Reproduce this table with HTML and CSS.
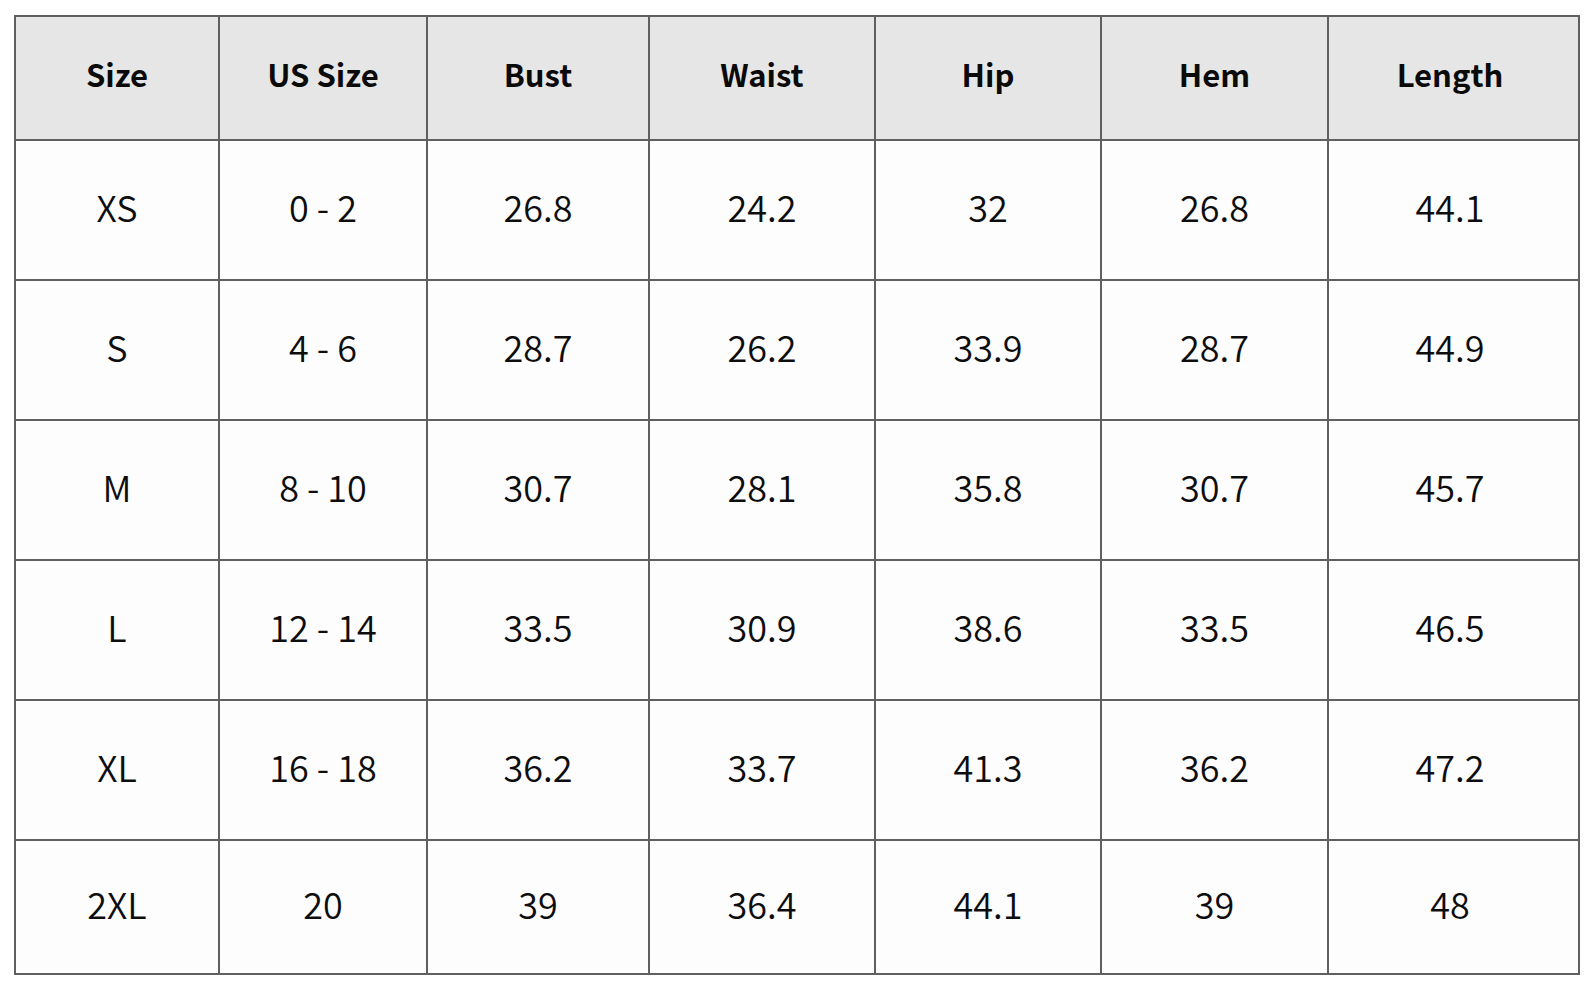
FILE: index.html
```html
<!DOCTYPE html>
<html>
<head>
<meta charset="utf-8">
<link rel="stylesheet" href="styles.css">
</head>
<body>
<div class="page">
<table class="chart">
<colgroup>
<col class="c1"><col class="c2"><col class="c3"><col class="c4"><col class="c5"><col class="c6"><col class="c7">
</colgroup>
<thead>
<tr><th>Size</th><th>US Size</th><th>Bust</th><th>Waist</th><th>Hip</th><th>Hem</th><th class="end">Length</th></tr>
</thead>
<tbody>
<tr><td>XS</td><td>0 - 2</td><td>26.8</td><td>24.2</td><td>32</td><td>26.8</td><td class="end">44.1</td></tr>
<tr><td>S</td><td>4 - 6</td><td>28.7</td><td>26.2</td><td>33.9</td><td>28.7</td><td class="end">44.9</td></tr>
<tr><td>M</td><td>8 - 10</td><td>30.7</td><td>28.1</td><td>35.8</td><td>30.7</td><td class="end">45.7</td></tr>
<tr><td>L</td><td>12 - 14</td><td>33.5</td><td>30.9</td><td>38.6</td><td>33.5</td><td class="end">46.5</td></tr>
<tr><td>XL</td><td>16 - 18</td><td>36.2</td><td>33.7</td><td>41.3</td><td>36.2</td><td class="end">47.2</td></tr>
<tr class="last"><td>2XL</td><td>20</td><td>39</td><td>36.4</td><td>44.1</td><td>39</td><td class="end">48</td></tr>
</tbody>
</table>
</div>
</body>
</html>
```
FILE: styles.css
```css
html, body {
  margin: 0;
  padding: 0;
  background: #ffffff;
}
.page {
  padding: 15px 0 0 14px;
}
.chart {
  border-collapse: collapse;
  table-layout: fixed;
  width: 1564px;
  font-family: "Noto Sans CJK JP", "Noto Sans", sans-serif;
  color: #0d0d0d;
  background: #fdfdfd;
}
.c1 { width: 204px; }
.c2 { width: 208px; }
.c3 { width: 222px; }
.c4 { width: 226px; }
.c5 { width: 226px; }
.c6 { width: 227px; }
.c7 { width: 251px; }
.chart th, .chart td {
  border: 2px solid #606060;
  text-align: center;
  vertical-align: middle;
  padding: 0;
}
.chart th {
  background: #e6e6e6;
  font-weight: 700;
  font-size: 31px;
  height: 112px;
  padding-bottom: 10px;
  color: #0a0a0a;
}
.chart td {
  font-size: 36px;
  font-weight: 350;
  height: 129px;
  padding-bottom: 9px;
}
.chart tr.last td {
  height: 123px;
}
.chart .end {
  padding-right: 7px;
}
```
